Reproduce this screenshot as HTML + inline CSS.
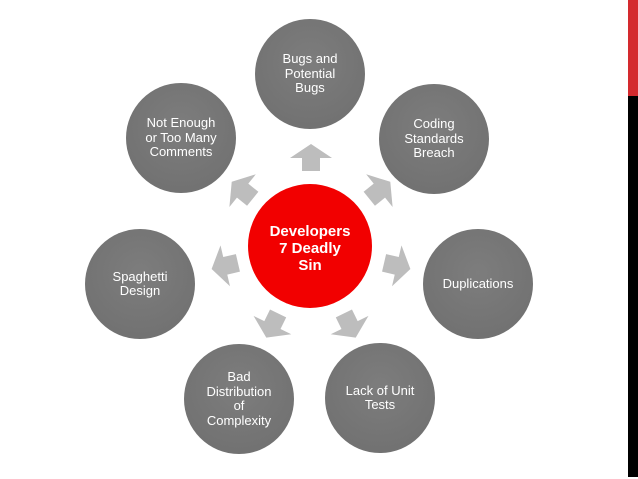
<!DOCTYPE html>
<html><head><style>
body{margin:0;width:638px;height:479px;background:#fff;overflow:hidden;position:relative;font-family:"Liberation Sans",sans-serif}
.c{position:absolute;width:110px;height:110px;border-radius:50%;background:radial-gradient(circle at 50% 40%,#7d7d7d,#6e6e6e);color:#fff;font-size:13px;line-height:14.5px;display:flex;align-items:center;justify-content:center;text-align:center}
</style></head><body>
<div style="position:absolute;left:628px;top:0;width:10px;height:96px;background:#d42a2e"></div>
<div style="position:absolute;left:628px;top:96px;width:10px;height:381px;background:#000"></div>
<svg width="638" height="479" style="position:absolute;left:0;top:0">
<g fill="#bdbdbd">
<g transform="translate(311,246)">
<path id="a" d="M0,-102 L21,-88 L9,-88 L9,-75 L-9,-75 L-9,-88 L-21,-88 Z"/>
<use href="#a" transform="rotate(51)"/>
<use href="#a" transform="rotate(103)"/>
<use href="#a" transform="rotate(154)"/>
<use href="#a" transform="rotate(206)"/>
<use href="#a" transform="rotate(257)"/>
<use href="#a" transform="rotate(309)"/>
</g></g>
<circle cx="310" cy="246" r="62" fill="#f20000"/>
<text x="310" y="236" fill="#fff" font-family="Liberation Sans" font-weight="bold" font-size="15" text-anchor="middle">Developers</text>
<text x="310" y="253" fill="#fff" font-family="Liberation Sans" font-weight="bold" font-size="15" text-anchor="middle">7 Deadly</text>
<text x="310" y="270" fill="#fff" font-family="Liberation Sans" font-weight="bold" font-size="15" text-anchor="middle">Sin</text>
</svg>
<div class="c" style="left:255px;top:19px">Bugs and<br>Potential<br>Bugs</div>
<div class="c" style="left:379px;top:84px">Coding<br>Standards<br>Breach</div>
<div class="c" style="left:423px;top:229px">Duplications</div>
<div class="c" style="left:325px;top:343px">Lack of Unit<br>Tests</div>
<div class="c" style="left:184px;top:344px">Bad<br>Distribution<br>of<br>Complexity</div>
<div class="c" style="left:85px;top:229px">Spaghetti<br>Design</div>
<div class="c" style="left:126px;top:83px">Not Enough<br>or Too Many<br>Comments</div>
</body></html>
